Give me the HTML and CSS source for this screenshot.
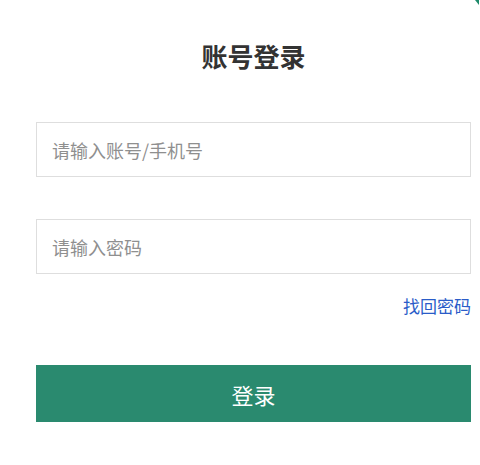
FILE: index.html
```html
<!DOCTYPE html>
<html lang="zh-CN">
<head>
<meta charset="utf-8">
<title>账号登录</title>
<link rel="stylesheet" href="styles.css">
</head>
<body>
<span class="corner"></span>
<main class="login">
  <h1 class="title">账号登录</h1>
  <form class="form">
    <input class="field" type="text" placeholder="请输入账号/手机号">
    <input class="field field-pass" type="password" placeholder="请输入密码">
    <div class="links"><a class="forgot" href="#">找回密码</a></div>
    <button class="submit" type="button">登录</button>
  </form>
</main>
</body>
</html>
```
FILE: styles.css
```css
html, body {
  margin: 0;
  padding: 0;
  background: #fff;
}
body {
  font-family: "Noto Sans CJK SC", "Noto Sans", sans-serif;
  width: 480px;
  height: 465px;
  position: relative;
  overflow: hidden;
}
.corner {
  position: absolute;
  top: 0;
  right: 1px;
  width: 0;
  height: 0;
  border-top: 5px solid #1e8a6a;
  border-left: 4px solid transparent;
}
.login {
  padding: 36px 9px 0 36px;
}
.title {
  margin: 0;
  font-size: 26px;
  line-height: 40px;
  font-weight: 700;
  color: #333;
  text-align: center;
}
.form {
  display: flex;
  flex-direction: column;
  margin-top: 46px;
}
.field {
  box-sizing: border-box;
  height: 55px;
  border: 1px solid #dedede;
  border-radius: 0;
  padding: 0 15px;
  font-family: inherit;
  font-size: 18px;
  color: #333;
  outline: none;
}
.field::placeholder {
  color: #8f8f8f;
}
.field-pass {
  margin-top: 42px;
}
.links {
  display: flex;
  justify-content: flex-end;
  margin-top: 20px;
}
.forgot {
  font-size: 17px;
  line-height: 24px;
  color: #2a5cc8;
  text-decoration: none;
}
.submit {
  box-sizing: border-box;
  margin-top: 47px;
  height: 57px;
  border: 0;
  background: #2a8a6f;
  color: #fff;
  font-family: inherit;
  font-size: 22px;
  cursor: pointer;
}
```
